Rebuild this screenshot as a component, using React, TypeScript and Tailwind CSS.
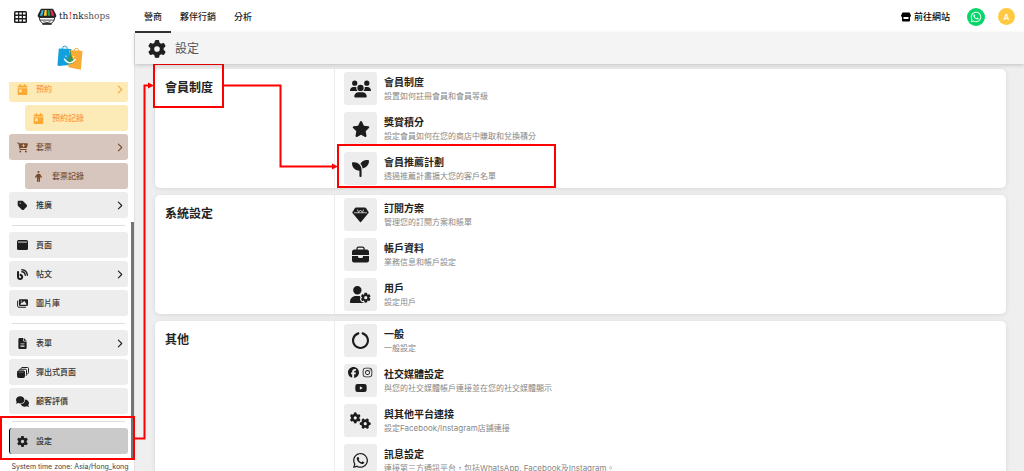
import type { ReactNode } from 'react';
import clsx from 'clsx';
import {
  FaBlog,
  FaCalendarDay,
  FaCartPlus,
  FaChevronRight,
  FaCircleNotch,
  FaComments,
  FaFacebook,
  FaFileLines,
  FaGear,
  FaGears,
  FaImages,
  FaInstagram,
  FaPerson,
  FaSeedling,
  FaStar,
  FaTag,
  FaUserGear,
  FaUsers,
  FaWhatsapp,
  FaYoutube,
} from 'react-icons/fa6';

type Tone = 'plain' | 'yellow' | 'brown' | 'active';

type NavItem = {
  label: string;
  icon: ReactNode;
  tone?: Tone;
  nested?: boolean;
  arrow?: boolean;
};

type Setting = { title: string; text: string; icon: ReactNode };

const GridIcon = () => (
  <svg viewBox="0 0 26 24" className="h-3 w-[13px]">
    <rect width="26" height="24" rx="3" fill="#1f1f1f" />
    <path
      d="M3 3h5v4H3zM10.500 3h5v4h-5zM18 3h5v4h-5zM3 10h5v4H3zM10.500 10h5v4h-5zM18 10h5v4h-5zM3 17h5v4H3zM10.500 17h5v4h-5zM18 17h5v4h-5z"
      fill="#fff"
    />
  </svg>
);

const PageIcon = () => (
  <svg viewBox="0 0 22 20" className="h-[10px] w-[11px]">
    <rect width="22" height="20" rx="3" fill="currentColor" />
    <rect x="2" y="2.5" width="18" height="3.5" rx="1" fill="#8b8b8b" />
  </svg>
);

const PopupIcon = () => (
  <svg viewBox="0 0 24 22" className="h-[11px] w-[12px]" fill="none" stroke="currentColor" strokeWidth="2">
    <path d="M8 3.5 9.5 1H21q2 0 2 2v8q0 2-2.500 3" />
    <path d="M4 7 5.500 4.500H17q2 0 2 2V15q0 2-1.500 3" />
    <rect x="1" y="8" width="14" height="13" rx="2" fill="currentColor" />
    <path d="M3 10.500h10" stroke="#aaa" strokeWidth="1" />
  </svg>
);

const ShopIcon = () => (
  <svg viewBox="0 0 20 20" className="h-[10px] w-[10px]" fill="currentColor">
    <path d="M3 1h14l3 6q0 3-3 3H3Q0 10 0 7z" />
    <path d="M2 10h3v4h10v-4h3v7q0 2-2 2H4q-2 0-2-2z" />
  </svg>
);

const DiamondIcon = () => (
  <svg viewBox="0 0 34 32" className="h-4 w-[17px]">
    <path d="M8 1h18q1 0 2 1l5 8q1 1 0 2L18 30q-1 1-2 0L1 12q-1-1 0-2l5-8q1-1 2-1z" fill="currentColor" />
    <path d="M4 11.500h26M11 5l2 6 4-5 4 5 2-6" fill="none" stroke="#ededed" strokeWidth="1.500" />
  </svg>
);

const BriefcaseIcon = () => (
  <svg viewBox="0 0 34 34" className="size-[17px]">
    <path d="M10 8V5q0-3 3-3h8q3 0 3 3v3" fill="none" stroke="currentColor" strokeWidth="2.500" />
    <path d="M5 7h24q5 0 5 5v6H0v-6q0-5 5-5z" fill="currentColor" />
    <path d="M0 20h12v1q0 3 3 3h4q3 0 3-3v-1h12v9q0 4-4 4H4q-4 0-4-4z" fill="currentColor" />
    <path d="M14 18h6v4h-6z" fill="#ededed" />
  </svg>
);

const BrandMark = () => (
  <svg viewBox="0 0 60 52" className="h-[17px] w-5">
    <path d="M14 2h32q3 0 4 3l8 16q2 8-5 8H7q-7 0-5-8l8-16q1-3 4-3z" fill="#242424" />
    <path d="M14 6h6l-4 18H8z" fill="#36b5d8" />
    <path d="M23 6h6v18h-9z" fill="#ffc928" />
    <path d="M32 6h5l3 18h-8z" fill="#22a45a" />
    <path d="M40 6h6l6 18h-8z" fill="#e72b62" />
    <path d="M6 29h48q-1 13-12 19H18Q7 42 6 29z" fill="#fff" stroke="#242424" strokeWidth="3" />
    <path d="M9 37h42" stroke="#242424" strokeWidth="2.500" />
    <path d="M19 42q11 5 22 0" fill="none" stroke="#242424" strokeWidth="2.500" />
    <path d="M17 49h26" stroke="#242424" strokeWidth="4" strokeLinecap="round" />
  </svg>
);

const BagsLogo = () => (
  <svg viewBox="0 0 78 76" className="h-[25px] w-[26px]">
    <path d="M16 12q0-9 7-9 8 0 8 9" fill="none" stroke="#2f9fd0" strokeWidth="3" />
    <path d="M51 17q3-8 9-7 7 2 6 10" fill="none" stroke="#f0a43a" strokeWidth="3" />
    <path d="M5 11l38 1 4 48-42 4q-4 0-4-4z" fill="#129fdc" />
    <path d="M37 15l40 3-5 57-38-7z" fill="#f9ac35" />
    <path d="M40 15q3 22 12 37-9 10-24 4 8-16 12-41z" fill="#36965a" />
    <path d="M22 43q15 22 33 1" fill="none" stroke="#fff" strokeWidth="4" strokeLinecap="round" />
    <circle cx="27" cy="34" r="2" fill="#fff" />
    <circle cx="50" cy="35" r="2" fill="#fff" />
  </svg>
);

const navGroups: NavItem[][] = [
  [
    { label: '預約', icon: <FaCalendarDay />, tone: 'yellow', arrow: true },
    { label: '預約記錄', icon: <FaCalendarDay />, tone: 'yellow', nested: true },
    { label: '套票', icon: <FaCartPlus />, tone: 'brown', arrow: true },
    { label: '套票記錄', icon: <FaPerson />, tone: 'brown', nested: true },
    { label: '推廣', icon: <FaTag />, arrow: true },
  ],
  [
    { label: '頁面', icon: <PageIcon /> },
    { label: '帖文', icon: <FaBlog />, arrow: true },
    { label: '圖片庫', icon: <FaImages /> },
  ],
  [
    { label: '表單', icon: <FaFileLines />, arrow: true },
    { label: '彈出式頁面', icon: <PopupIcon /> },
    { label: '顧客評價', icon: <FaComments className="size-[13px]" /> },
  ],
  [{ label: '設定', icon: <FaGear />, tone: 'active' }],
];

const sections: { title: string; items: Setting[] }[] = [
  {
    title: '會員制度',
    items: [
      { title: '會員制度', text: '設置如何註冊會員和會員等級', icon: <FaUsers className="h-[18px] w-[21px]" /> },
      { title: '獎賞積分', text: '設定會員如何在您的商店中賺取和兌換積分', icon: <FaStar className="size-[18px]" /> },
      { title: '會員推薦計劃', text: '透過推薦計畫擴大您的客戶名單', icon: <FaSeedling className="size-[17px]" /> },
    ],
  },
  {
    title: '系統設定',
    items: [
      { title: '訂閱方案', text: '管理您的訂閱方案和賬單', icon: <DiamondIcon /> },
      { title: '帳戶資料', text: '業務信息和帳戶設定', icon: <BriefcaseIcon /> },
      { title: '用戶', text: '設定用戶', icon: <FaUserGear className="h-[17px] w-[21px]" /> },
    ],
  },
  {
    title: '其他',
    items: [
      { title: '一般', text: '一般設定', icon: <FaCircleNotch className="size-[17px]" /> },
      {
        title: '社交媒體設定',
        text: '與您的社交媒體帳戶連接並在您的社交媒體顯示',
        icon: (
          <span className="flex flex-wrap justify-center gap-x-[3px] gap-y-1">
            <FaFacebook className="size-[11px]" />
            <FaInstagram className="size-[11px]" />
            <FaYoutube className="size-3" />
          </span>
        ),
      },
      { title: '與其他平台連接', text: '設定Facebook/Instagram店鋪連接', icon: <FaGears className="h-[17px] w-[21px]" /> },
      {
        title: '訊息設定',
        text: '連接第三方通訊平台，包括WhatsApp, Facebook及Instagram。',
        icon: <FaWhatsapp className="size-[17px]" />,
      },
    ],
  },
];

const toneClass: Record<Tone, string> = {
  plain: 'bg-[#ededed] pl-[7px] text-[#1f1f1f]',
  yellow: 'bg-[#fcebb6] pl-[7px] text-[#fba834]',
  brown: 'bg-[#d6c6bd] pl-[7px] text-[#7b4b2a]',
  active: 'border-l border-black bg-[#cacaca] pl-[6px] text-[#1f1f1f]',
};

const labelClass: Record<Tone, string> = {
  plain: 'text-[#333]',
  yellow: 'text-[#fb9a48]',
  brown: 'text-[#74513d]',
  active: 'text-[#333]',
};

const SideLink = ({ item }: { item: NavItem }) => {
  const tone = item.tone ?? 'plain';
  return (
    <a
      href="#"
      className={clsx('flex h-[26px] shrink-0 items-center rounded-[3px] pr-1', item.nested && 'ml-4', toneClass[tone])}
    >
      <span className="flex w-[13px] justify-center text-[11px]">{item.icon}</span>
      <span className={clsx('ml-[7px] flex-1 text-[8px] font-medium', labelClass[tone])}>{item.label}</span>
      {item.arrow ? <FaChevronRight className="size-[9px]" /> : null}
    </a>
  );
};

const Sidebar = () => (
  <aside className="flex w-[135px] shrink-0 flex-col border-r border-[#e2e2e2] bg-white">
    <div className="flex h-[49px] shrink-0 items-center justify-center pl-[6px]">
      <BagsLogo />
    </div>
    <div className="flex min-h-0 flex-1 overflow-hidden">
      <nav className="-mt-[6px] flex flex-1 flex-col gap-[3px] pl-[9px]">
        {navGroups.map((group, i) => (
          <div key={group[0].label} className="flex flex-col gap-[3px]">
            {i > 0 ? (
              <div className="flex h-2 items-center px-[3px]">
                <hr className="w-full border-[#dedede]" />
              </div>
            ) : null}
            {group.map((item) => (
              <SideLink key={item.label} item={item} />
            ))}
          </div>
        ))}
      </nav>
      <div className="ml-[3px] flex w-[3px] flex-col">
        <div className="mt-[140px] flex-1 bg-[#757575]" />
      </div>
    </div>
    <p className="flex h-[11px] shrink-0 items-end justify-center pl-[6px] text-[7px] leading-[9px] whitespace-nowrap text-[#444]">
      System time zone: Asia/Hong_kong
    </p>
  </aside>
);

const TopBar = () => (
  <header className="flex h-[33px] shrink-0 items-stretch bg-white pr-[9px] pl-[14px] text-[#222]">
    <div className="flex w-[121px] items-center">
      <button type="button" aria-label="Menu">
        <GridIcon />
      </button>
      <a href="#" className="ml-[10px] flex items-center gap-[2px] font-['DejaVu_Serif','Noto_Sans_CJK_TC',serif] text-[9px]">
        <BrandMark />
        <span>
          th<span className="font-bold text-[#f04a35]">!</span>nk
          <span className="text-[#555]">shops</span>
        </span>
      </a>
    </div>
    <nav className="flex text-[9px] font-medium">
      <a href="#" className="flex items-center border-y-2 border-t-transparent border-b-[#333] px-[9px]">營商</a>
      <a href="#" className="flex items-center px-[9px]">夥伴行銷</a>
      <a href="#" className="flex items-center px-[9px]">分析</a>
    </nav>
    <div className="ml-auto flex items-center">
      <a href="#" className="flex items-center gap-[3px] text-[9px] font-medium text-black">
        <ShopIcon />
        前往網站
      </a>
      <a href="#" aria-label="WhatsApp" className="ml-[17px] flex size-[18px] items-center justify-center rounded-full bg-[#06d669] text-white">
        <FaWhatsapp className="size-3" />
      </a>
      <button type="button" className="ml-[13px] flex size-[17px] items-center justify-center rounded-full bg-[#ffc941] text-[8px] font-semibold text-white">
        A
      </button>
    </div>
  </header>
);

const SettingRow = ({ item }: { item: Setting }) => (
  <a href="#" className="flex items-center gap-[7px]">
    <span className="flex size-[33px] shrink-0 items-center justify-center rounded-[3px] bg-[#ededed] text-[#1c1c1c]">
      {item.icon}
    </span>
    <span className="flex h-[33px] flex-col pt-[3px]">
      <span className="text-[10px] leading-[14px] font-bold text-[#222]">{item.title}</span>
      <span className="text-[8px] leading-[14px] text-[#888]">{item.text}</span>
    </span>
  </a>
);

const Annotations = () => (
  <svg width="1024" height="471" className="pointer-events-none absolute top-0 left-0" fill="none" stroke="#ff0000" strokeWidth="2">
    <rect x="1" y="417" width="133" height="42" />
    <rect x="154" y="64" width="69" height="43" />
    <rect x="338" y="145" width="217" height="42" />
    <path d="M134 438.500h10.500v-353H149M223 85.500h57.500v81H333" />
    <path d="M148 82.500l6 3-6 3zM332 163.500l6 3-6 3z" fill="#ff0000" stroke="none" />
  </svg>
);

export default function App() {
  return (
    <div className="relative flex h-screen flex-col overflow-hidden bg-white font-[Inter,'Noto_Sans_CJK_TC',sans-serif]">
      <TopBar />
      <div className="flex min-h-0 flex-1">
        <Sidebar />
        <main className="flex min-w-0 flex-1 flex-col bg-[#efefef]">
          <div className="z-10 flex h-[31px] shrink-0 items-center gap-[9px] bg-[#f4f4f4] pl-[13px] shadow-[0_1px_4px_rgba(0,0,0,0.2)]">
            <FaGear className="size-[18px] text-[#1f1f1f]" />
            <h1 className="text-[12px] text-[#555]">設定</h1>
          </div>
          <div className="flex min-h-0 flex-1 flex-col gap-[7px] overflow-hidden pt-[5px] pr-[18px] pl-5">
            {sections.map((section) => (
              <section key={section.title} className="flex shrink-0 rounded-[5px] bg-white shadow-[0_1px_5px_rgba(0,0,0,0.1)]">
                <h2 className="w-[180px] shrink-0 border-r border-[#ececec] pt-[10px] pl-[10px] text-[12px] leading-[18px] font-bold text-[#222]">
                  {section.title}
                </h2>
                <div className="flex flex-1 flex-col gap-[7px] py-[3px] pl-[9px]">
                  {section.items.map((item) => (
                    <SettingRow key={item.title} item={item} />
                  ))}
                </div>
              </section>
            ))}
          </div>
        </main>
      </div>
      <Annotations />
    </div>
  );
}
